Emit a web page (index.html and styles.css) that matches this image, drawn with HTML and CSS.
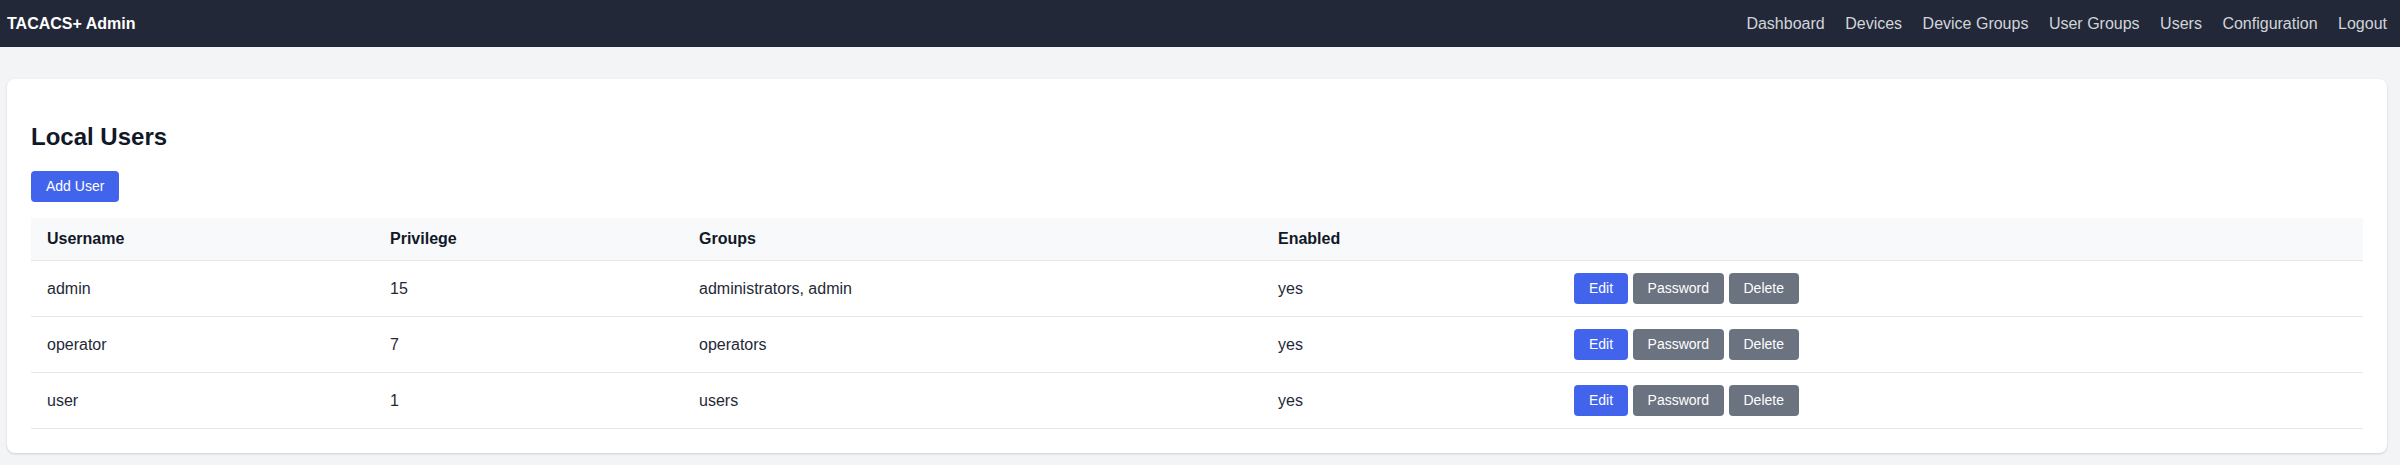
FILE: index.html
```html
<!DOCTYPE html>
<html lang="en">
<head>
<meta charset="utf-8">
<title>TACACS+ Admin - Users</title>
<link rel="stylesheet" href="styles.css">
</head>
<body>
<header class="topbar">
  <div class="brand">TACACS+ Admin</div>
  <nav class="nav">
    <a href="#">Dashboard</a>
    <a href="#">Devices</a>
    <a href="#">Device Groups</a>
    <a href="#">User Groups</a>
    <a href="#">Users</a>
    <a href="#">Configuration</a>
    <a href="#">Logout</a>
  </nav>
</header>
<main class="main">
  <section class="card">
    <h2 class="card-title">Local Users</h2>
    <div class="toolbar">
      <button class="btn btn-primary">Add User</button>
    </div>
    <table class="table">
      <colgroup>
        <col class="c-user">
        <col class="c-priv">
        <col class="c-groups">
        <col class="c-enabled">
        <col class="c-actions">
      </colgroup>
      <thead>
        <tr>
          <th>Username</th>
          <th>Privilege</th>
          <th>Groups</th>
          <th>Enabled</th>
          <th></th>
        </tr>
      </thead>
      <tbody>
        <tr>
          <td>admin</td>
          <td>15</td>
          <td>administrators, admin</td>
          <td>yes</td>
          <td><button class="btn btn-primary">Edit</button> <button class="btn btn-secondary">Password</button> <button class="btn btn-secondary">Delete</button></td>
        </tr>
        <tr>
          <td>operator</td>
          <td>7</td>
          <td>operators</td>
          <td>yes</td>
          <td><button class="btn btn-primary">Edit</button> <button class="btn btn-secondary">Password</button> <button class="btn btn-secondary">Delete</button></td>
        </tr>
        <tr>
          <td>user</td>
          <td>1</td>
          <td>users</td>
          <td>yes</td>
          <td><button class="btn btn-primary">Edit</button> <button class="btn btn-secondary">Password</button> <button class="btn btn-secondary">Delete</button></td>
        </tr>
      </tbody>
    </table>
  </section>
</main>
</body>
</html>
```

FILE: styles.css
```css
* {
  box-sizing: border-box;
}

html, body {
  margin: 0;
  padding: 0;
}

body {
  background: #f3f4f6;
  font-family: "Liberation Sans", Arial, Helvetica, sans-serif;
  font-size: 16px;
  color: #1f2937;
}

.topbar {
  height: 47px;
  background: #222837;
  display: flex;
  align-items: center;
  justify-content: space-between;
  padding: 0 13px 0 7px;
}

.brand {
  color: #ffffff;
  font-weight: 700;
  font-size: 16px;
}

.nav {
  display: flex;
  gap: 20.5px;
}

.nav a {
  color: #d1d5db;
  text-decoration: none;
  font-size: 16px;
}

.main {
  padding: 32px 13px 12px 7px;
}

.card {
  background: #ffffff;
  border-radius: 8px;
  box-shadow: 0 1px 3px rgba(0, 0, 0, 0.1), 0 1px 2px rgba(0, 0, 0, 0.06);
  padding: 24px;
}

.card-title {
  margin: 20px 0 20px;
  font-size: 24px;
  line-height: 28px;
  font-weight: 700;
  color: #111827;
}

.toolbar {
  margin-bottom: 16px;
}

.btn {
  display: inline-block;
  border: 0;
  border-radius: 4px;
  padding: 7px 15px;
  font-family: "Liberation Sans", Arial, Helvetica, sans-serif;
  font-size: 14px;
  line-height: 17px;
  color: #ffffff;
  cursor: pointer;
  vertical-align: middle;
}

.btn-primary {
  background: #4263eb;
}

.btn-secondary {
  background: #6b7280;
}

.table {
  width: 100%;
  border-collapse: collapse;
  table-layout: fixed;
}

.c-user { width: 343px; }
.c-priv { width: 309px; }
.c-groups { width: 579px; }
.c-enabled { width: 296px; }

.table th {
  background: #f8f9fa;
  text-align: left;
  font-weight: 700;
  color: #111827;
  padding: 12px 16px;
  border-bottom: 1px solid #e5e7eb;
}

.table td {
  padding: 12px 16px;
  border-bottom: 1px solid #e5e7eb;
  color: #1f2937;
  vertical-align: middle;
}
```
